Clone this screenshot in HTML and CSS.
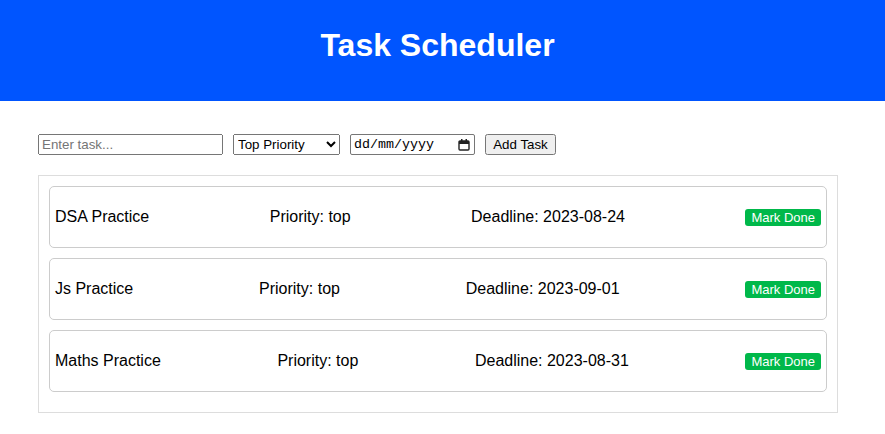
FILE: index.html
```html
<!DOCTYPE html>
<html lang="en">
<head>
    <meta charset="UTF-8">
    <meta name="viewport" content="width=device-width, initial-scale=1.0">
    <title>Task Scheduler</title>
    <link rel="stylesheet" href="styles.css">
</head>
<body>

<header>
    <h1>Task Scheduler</h1>
</header>

<main class="main">
    <form class="task-form">
        <input type="text" class="task-input" placeholder="Enter task...">
        <select class="priority-select">
            <option>Top Priority</option>
            <option>Middle Priority</option>
            <option>Low Priority</option>
        </select>
        <label class="date-field">
            <input type="text" class="date-text" placeholder="dd/mm/yyyy">
            <svg class="cal-icon" width="12" height="13" viewBox="0 0 12 13">
                <rect x="1" y="3" width="10" height="9" rx="1" fill="none" stroke="#222" stroke-width="1.4"/>
                <rect x="1" y="3" width="10" height="3" fill="#222"/>
                <rect x="3" y="1" width="1.5" height="2.5" fill="#222"/>
                <rect x="7.5" y="1" width="1.5" height="2.5" fill="#222"/>
            </svg>
        </label>
        <button type="button" class="add-btn">Add Task</button>
    </form>

    <div class="task-list">
        <div class="task">
            <p>DSA Practice</p>
            <p>Priority: top</p>
            <p>Deadline: 2023-08-24</p>
            <button class="done-btn">Mark Done</button>
        </div>
        <div class="task">
            <p>Js Practice</p>
            <p>Priority: top</p>
            <p>Deadline: 2023-09-01</p>
            <button class="done-btn">Mark Done</button>
        </div>
        <div class="task">
            <p>Maths Practice</p>
            <p>Priority: top</p>
            <p>Deadline: 2023-08-31</p>
            <button class="done-btn">Mark Done</button>
        </div>
    </div>
</main>

</body>
</html>
```

FILE: styles.css
```css
body {
    font-family: "Liberation Sans", Arial, sans-serif;
    margin: 0;
    padding: 0;
    background: #fff;
    color: #000;
}
header {
    background: #0055ff;
    color: white;
    text-align: center;
    padding: 27px 10px 37px 0;
}
header h1 {
    margin: 0;
    font-size: 32px;
}
.main {
    padding: 33px 0 0 38px;
}
.task-form {
    display: flex;
    align-items: center;
    gap: 10px;
    height: 21px;
}
.task-form input,
.task-form select,
.task-form button {
    font-family: "Liberation Sans", Arial, sans-serif;
    font-size: 13.33px;
    box-sizing: border-box;
    height: 21px;
    margin: 0;
}
.task-input {
    width: 185px;
}
.priority-select {
    width: 107px;
}
.date-field {
    display: flex;
    align-items: center;
    justify-content: space-between;
    width: 125px;
    height: 21px;
    box-sizing: border-box;
    border: 1px solid #767676;
    border-radius: 2px;
    padding: 0 4px 0 3px;
}
.task-form .date-text {
    border: none;
    outline: none;
    padding: 0;
    width: 96px;
    height: 19px;
    font-family: "Liberation Mono", "DejaVu Sans Mono", monospace;
    font-size: 13.33px;
}
.date-text::placeholder {
    color: #000;
}
.cal-icon {
    display: block;
}
.add-btn {
    width: 71px;
}
.task-list {
    margin-top: 20px;
    width: 800px;
    box-sizing: border-box;
    border: 1px solid #ddd;
    padding: 10px;
}
.task {
    display: flex;
    justify-content: space-between;
    align-items: center;
    border: 1px solid #ccc;
    border-radius: 5px;
    padding: 0 5px;
    margin-bottom: 10px;
}
.task p {
    margin: 21px 0;
    font-size: 16px;
    line-height: 18px;
}
.done-btn {
    background: #00b84a;
    color: white;
    border: none;
    border-radius: 3px;
    font-family: "Liberation Sans", Arial, sans-serif;
    font-size: 13px;
    padding: 1px 6px;
    line-height: 15px;
    cursor: pointer;
}
```
